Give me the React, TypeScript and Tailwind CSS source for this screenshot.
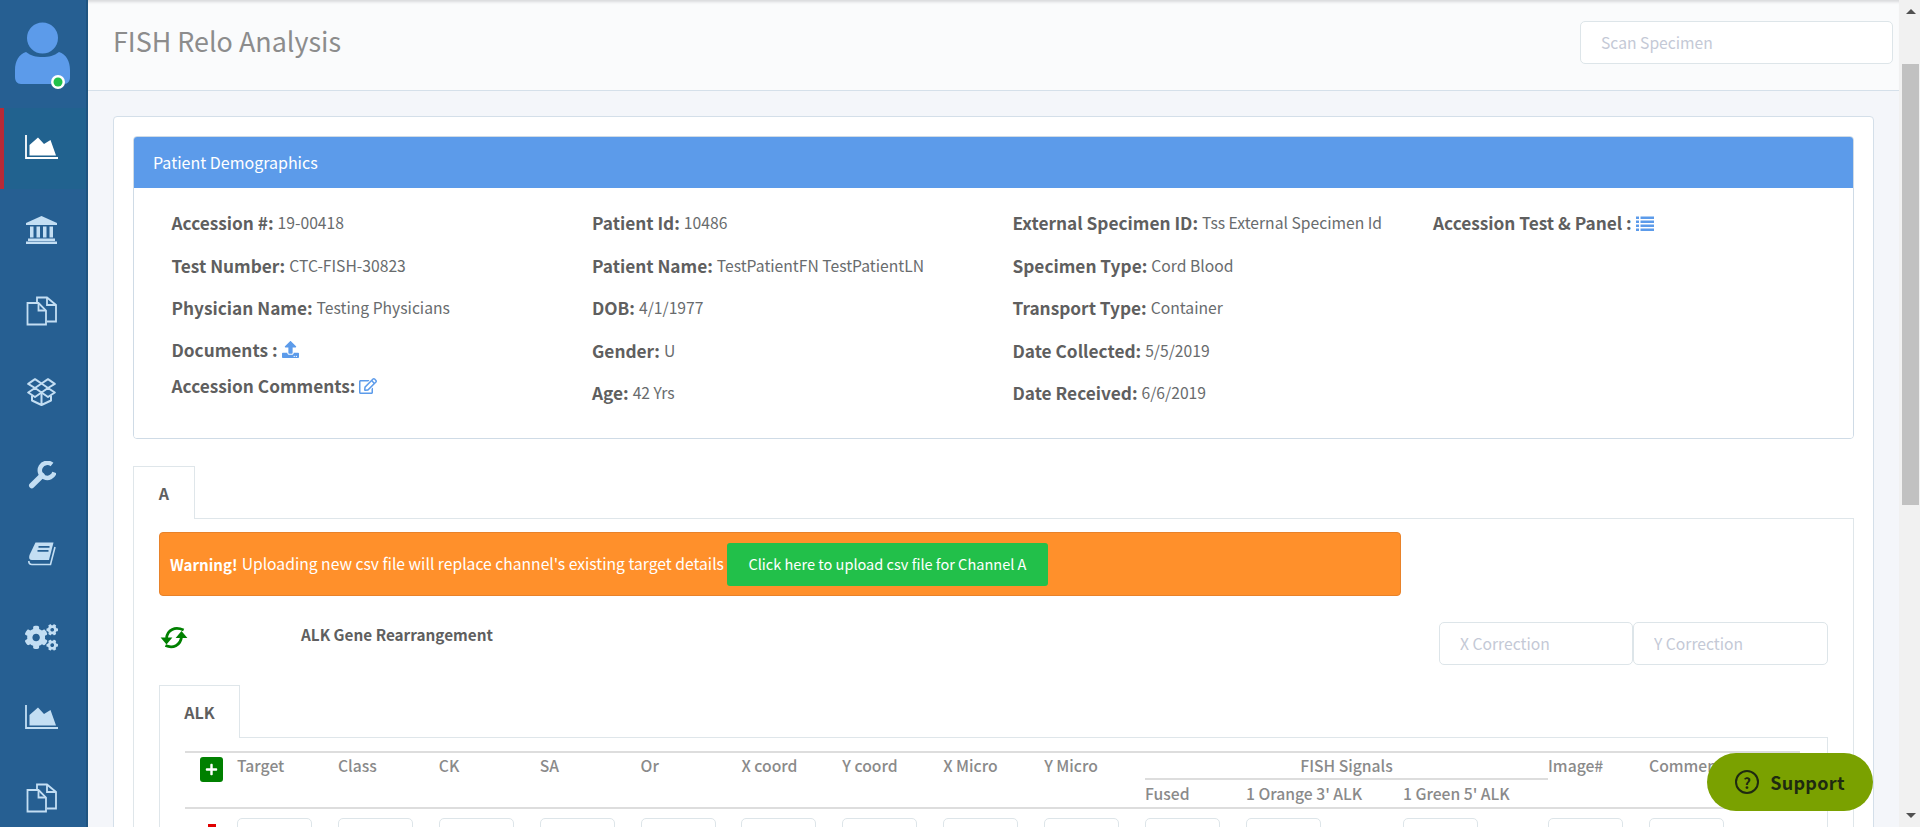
import type { ReactNode } from "react";
import { FaCogs, FaPlus, FaRegEdit, FaUpload } from "react-icons/fa";

const AreaIcon = () => (
  <svg width="33" height="24" viewBox="0 0 33 24" className="block">
    <path d="M1 0v23h32" fill="none" stroke="currentColor" strokeWidth="1.800" />
    <path d="M4.500 20.500V10L13 2.500l6 6.500 6.500-4 5.500 15.500z" fill="currentColor" />
  </svg>
);

const BankIcon = () => (
  <svg width="31" height="28" viewBox="0 0 31 28" fill="currentColor" className="block">
    <path d="M15.500 0L31 7v2H0V7z" />
    <path d="M4 10.500h3.500v11H4zM10.500 10.500H14v11h-3.500zM17 10.500h3.500v11H17zM23.500 10.500H27v11h-3.500z" />
    <path d="M2 22.500h27V25H2zM0 25.500h31V28H0z" />
  </svg>
);

const FilesIcon = () => (
  <svg width="31" height="30" viewBox="0 0 31 30" fill="none" stroke="currentColor" strokeWidth="1.800" className="block">
    <path d="M11 6V1.500h10L30 9v16.500h-9" />
    <path d="M21 1.500V9h9" />
    <path d="M1.500 7h11l7.500 7.500v14H1.500z" />
    <path d="M12.500 7v7.500H20" />
  </svg>
);

const BoxIcon = () => (
  <svg width="29" height="28" viewBox="0 0 29 28" fill="none" stroke="currentColor" strokeWidth="2" strokeLinejoin="round" className="block">
    <path d="M8 1.200L14.500 5.500 8 10 1.200 5.800z" />
    <path d="M21 1.200L14.500 5.500 21 10l6.800-4.200z" />
    <path d="M8 10l6.500 4.500L8 19l-6.800-4.500zM21 10l-6.500 4.500L21 19l6.800-4.500z" />
    <path d="M5 17.500v5l9.500 4.500 9.500-4.500v-5M14.500 14.500V27" />
  </svg>
);

const WrenchIcon = () => (
  <svg width="28" height="28" viewBox="0 0 28 28" fill="none" stroke="currentColor" className="block">
    <path d="M3.800 24.500L14 14.500" strokeWidth="5.500" strokeLinecap="round" />
    <path d="M24 3.500A7.500 7.500 0 1 0 26.500 11.500" strokeWidth="4.500" />
  </svg>
);

const BookIcon = () => (
  <svg width="28" height="24" viewBox="0 0 28 24" className="block">
    <path d="M7.500.5h18L21 18H4Q0 18 1.500 13z" fill="currentColor" />
    <path d="M27 5l-4.500 17.500H4Q.8 22.500.8 19" fill="none" stroke="currentColor" strokeWidth="1.600" />
    <path d="M10.500 4.800h11M9.500 8.800h11" stroke="#265f92" strokeWidth="1.800" />
  </svg>
);

const ListIcon = () => (
  <svg width="18" height="15" viewBox="0 0 18 15" fill="#5c9bea" className="block">
    <path d="M0 .5h3V3H0zM0 4.500h3V7H0zM0 8.500h3V11H0zM0 12.500h3V15H0z" />
    <path d="M4.500.5H18V3H4.500zM4.500 4.500H18V7H4.500zM4.500 8.500H18V11H4.500zM4.500 12.500H18V15H4.500z" />
  </svg>
);

const SyncIcon = () => (
  <svg width="30" height="23" viewBox="0 0 28 21" className="block">
    <path d="M23 3.500C15 0 8 3 7 11M6 18c7 3 14 0 15-8" fill="none" stroke="#008000" strokeWidth="2.600" />
    <path d="M1.500 10.500h11L7 17zM15.500 11h11L21 4.500z" fill="#008000" />
  </svg>
);

const Avatar = () => (
  <div className="h-[108px]">
    <svg width="88" height="108" viewBox="0 0 88 108" className="block">
      <circle cx="42.500" cy="38" r="15.500" fill="#5c9bea" />
      <path d="M26 52c5 4 10 5 16.500 5S54 56 59 52c7 2 11 9 11 18v7c0 4-2 7-6 7H21c-4 0-6-3-6-7v-7c0-9 4-16 11-18z" fill="#5c9bea" />
      <circle cx="58" cy="82" r="7" fill="#fff" />
      <circle cx="58" cy="82" r="4.500" fill="#22c04a" />
    </svg>
  </div>
);

const navItems: { icon: ReactNode; active?: boolean; cls?: string }[] = [
  { icon: <AreaIcon />, active: true, cls: "pb-[3px]" },
  { icon: <BankIcon />, cls: "pr-[4px]" },
  { icon: <FilesIcon /> },
  { icon: <BoxIcon /> },
  { icon: <WrenchIcon />, cls: "pt-[5px]" },
  { icon: <BookIcon /> },
  { icon: <FaCogs size={33} />, cls: "pt-[5px]" },
  { icon: <AreaIcon />, cls: "pt-[3px]" },
  { icon: <FilesIcon />, cls: "pt-[3px]" },
];

const Sidebar = () => (
  <aside className="w-[88px] shrink-0 h-full bg-[#265f92] border-r-2 border-[#1f5480] overflow-hidden">
    <Avatar />
    {navItems.map((item, i) => (
      <div
        key={i}
        className={
          item.active
            ? `h-[81px] flex items-center justify-center bg-[#21628f] border-l-4 border-[#b72a37] text-white pr-[7px] ${item.cls ?? ""}`
            : `h-[81px] flex items-center justify-center text-[#c3def3] pr-[3px] ${item.cls ?? ""}`
        }
      >
        {item.icon}
      </div>
    ))}
  </aside>
);

const Field = ({ label, value, icon, h = "h-[42.5px]" }: { label: string; value?: string; icon?: ReactNode; h?: string }) => (
  <div className={`${h} flex items-center gap-[4px] whitespace-nowrap`}>
    <span className="text-[17.25px] font-semibold text-[#5f5f5f] leading-5">{label}</span>
    {value && <span className="text-[15.68px] text-[#686b6d] leading-5">{value}</span>}
    {icon}
  </div>
);

const Demographics = () => (
  <section className="rounded-[4px] border border-[#cfdbe6] overflow-hidden">
    <div className="h-[51px] bg-[#5c9bea] text-white text-[16px] flex items-center pl-[19px] pb-[1px]">Patient Demographics</div>
    <div className="grid grid-cols-[420.500px_420.500px_420.500px_1fr] pl-[37.5px] pt-[14px] h-[250px] bg-white">
      <div>
        <Field label="Accession #:" value="19-00418" />
        <Field label="Test Number:" value="CTC-FISH-30823" />
        <Field label="Physician Name:" value="Testing Physicians" />
        <Field label="Documents :" icon={<FaUpload size={17} color="#5c9bea" />} h="h-[40px]" />
        <Field label="Accession Comments:" icon={<FaRegEdit size={18} color="#5c9bea" />} h="h-[32px]" />
      </div>
      <div>
        <Field label="Patient Id:" value="10486" />
        <Field label="Patient Name:" value="TestPatientFN TestPatientLN" />
        <Field label="DOB:" value="4/1/1977" />
        <Field label="Gender:" value="U" />
        <Field label="Age:" value="42 Yrs" />
      </div>
      <div>
        <Field label="External Specimen ID:" value="Tss External Specimen Id" />
        <Field label="Specimen Type:" value="Cord Blood" />
        <Field label="Transport Type:" value="Container" />
        <Field label="Date Collected:" value="5/5/2019" />
        <Field label="Date Received:" value="6/6/2019" />
      </div>
      <div>
        <Field label="Accession Test & Panel :" icon={<ListIcon />} />
      </div>
    </div>
  </section>
);

const inputCls =
  "h-[43px] rounded-[5px] border border-[#dde5e9] bg-white px-[20px] text-[15.68px] placeholder:text-[#c4c9d6] outline-none";

const cellInput = "h-[40px] rounded-[5px] border border-[#dde5e9] bg-white";

const head = "text-[15.68px] font-medium text-[#8a8a8a] leading-5 whitespace-nowrap";

const simpleCols = ["Target", "Class", "CK", "SA", "Or", "X coord", "Y coord", "X Micro", "Y Micro"];

const TargetTable = () => (
  <div className="grid grid-cols-[52px_repeat(9,100.900px)_101px_157px_145px_101px_151px] ml-[25px] mr-[27px] border-t-2 border-[#dddddd]">
    <div className="row-span-2 pl-[15px] pt-[4px]">
      <button className="w-[23px] h-[25px] rounded-[3px] bg-[#008000] text-white flex items-center justify-center">
        <FaPlus size={13} />
      </button>
    </div>
    {simpleCols.map((c) => (
      <div key={c} className={`${head} row-span-2 pt-[3px]`}>
        {c}
      </div>
    ))}
    <div className={`${head} col-span-3 h-[27px] border-b-2 border-[#dddddd] text-center pt-[3px]`}>FISH Signals</div>
    <div className={`${head} row-span-2 pt-[3px]`}>Image#</div>
    <div className={`${head} row-span-2 pt-[3px]`}>Comments</div>
    <div className={`${head} h-[27px] flex items-center`}>Fused</div>
    <div className={`${head} h-[27px] flex items-center`}>1 Orange 3' ALK</div>
    <div className={`${head} h-[27px] flex items-center`}>1 Green 5' ALK</div>

    <div className="col-span-full border-t-2 border-[#dddddd] h-[11px]" />

    <div className="pl-[23px] pt-[6px]">
      <div className="w-[8px] h-[4px] bg-[#e00000]" />
    </div>
    {simpleCols.map((c) => (
      <div key={c} className={`${cellInput} w-[75px]`} />
    ))}
    {[0, 1, 2, 3, 4].map((i) => (
      <div key={i} className={`${cellInput} w-[75px]`} />
    ))}
  </div>
);

const ChannelPane = () => (
  <div className="border border-[#dfe6ea] -mt-px pt-[13px] pl-[25px] pr-[25px] bg-white">
    <div className="w-[1242px] h-[64px] rounded-[4px] bg-[#ff902b] border border-[#e8822a] flex items-center pl-[10px] text-white text-[15.68px] whitespace-nowrap">
      <strong className="font-bold text-[15.1px]">Warning!</strong>
      <span className="ml-[4px]">Uploading new csv file will replace channel's existing target details</span>
      <button className="ml-[3px] w-[321px] h-[43px] rounded-[3px] bg-[#22c04a] text-white text-[14.56px]">
        Click here to upload csv file for Channel A
      </button>
    </div>

    <div className="flex items-start mt-[26px] h-[63px]">
      <div className="mt-[4px]">
        <SyncIcon />
      </div>
      <div className="ml-[112px] mt-[2px] text-[15.3px] font-semibold text-[#5f5f5f] leading-5">ALK Gene Rearrangement</div>
      <div className="ml-auto flex">
        <input placeholder="X Correction" className={`${inputCls} w-[194px]`} />
        <input placeholder="Y Correction" className={`${inputCls} w-[195px]`} />
      </div>
    </div>

    <div className="flex">
      <div className="w-[81px] h-[53px] border border-b-0 border-[#dfe6ea] bg-white relative z-10 flex items-center justify-center text-[16px] font-semibold text-[#5f5f5f]">
        ALK
      </div>
    </div>
    <div className="border border-[#dfe6ea] -mt-px pt-[13px]">
      <TargetTable />
    </div>
  </div>
);

const Scrollbar = () => (
  <div className="w-[21px] shrink-0 h-full bg-[#f1f1f1] flex flex-col items-center pl-[2px]">
    <div className="h-[64px] flex items-start pt-[9px]">
      <div className="w-0 h-0 border-x-[5px] border-x-transparent border-b-[5px] border-b-[#505050]" />
    </div>
    <div className="w-[17px] h-[441px] bg-[#c1c1c1]" />
    <div className="mt-auto pb-[9px]">
      <div className="w-0 h-0 border-x-[5px] border-x-transparent border-t-[5px] border-t-[#505050]" />
    </div>
  </div>
);

export default function App() {
  return (
    <div className="relative h-screen flex overflow-hidden bg-[#f4f6fa] font-['Noto_Sans_CJK_SC',sans-serif]">
      <Sidebar />
      <main className="flex-1 min-w-0 h-full overflow-hidden">
        <header className="h-[91px] pt-[5px] bg-[#fafbfc] border-b border-[#d5e0ea] flex items-center justify-between pl-[25px] pr-[6px] shadow-[inset_0_4px_3px_-2px_#d8d9dc]">
          <h1 className="text-[26.88px] leading-9 text-[#8c8c8c] pb-[13px]">FISH Relo Analysis</h1>
          <input placeholder="Scan Specimen" className={`${inputCls} w-[313px] mb-[10px]`} />
        </header>
        <div className="ml-[25px] mr-[25px] mt-[25px] bg-white border border-[#d4dfe9] rounded-[4px] px-[19px] pt-[19px] h-[900px]">
          <Demographics />
          <div className="mt-[27px] flex">
            <div className="w-[62px] h-[53px] border border-b-0 border-[#dfe6ea] bg-white relative z-10 flex items-center justify-center text-[16px] font-semibold text-[#5f5f5f]">
              A
            </div>
          </div>
          <ChannelPane />
        </div>
      </main>
      <Scrollbar />
      <button className="absolute left-[1707px] top-[753px] w-[166px] h-[58px] rounded-[29px] bg-[#7aa100] flex items-center justify-center gap-[11px] text-[#1e2a10] text-[18px] font-bold tracking-[0.3px]">
        <span className="w-[24px] h-[24px] rounded-full border-2 border-[#1e2a10] flex items-center justify-center text-[15px] leading-none">?</span>
        Support
      </button>
    </div>
  );
}
